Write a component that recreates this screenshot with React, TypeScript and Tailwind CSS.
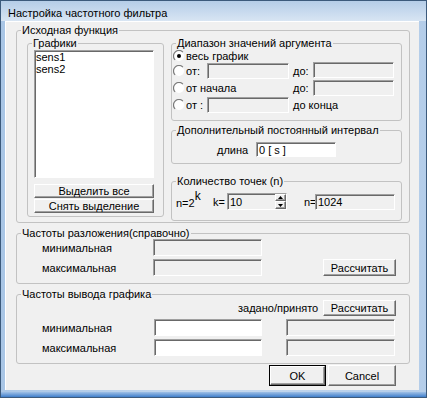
import React from "react";

const sunken =
  "border border-t-[#a0a0a0] border-l-[#a0a0a0] border-b-white border-r-white shadow-[inset_1px_1px_0_#696969]";
const raised =
  "border border-t-white border-l-white border-b-[#696969] border-r-[#696969] shadow-[inset_-1px_-1px_0_#a0a0a0] bg-[#f0f0f0] flex items-center justify-center";
const group = "border border-[#c2c2c2] rounded-[3px]";

function Radio({ checked }: { checked?: boolean }) {
  return (
    <svg width="12" height="12" viewBox="0 0 12 12" className="shrink-0">
      <circle cx="6" cy="6" r="5" fill="#ffffff" />
      <path d="M 2.1 9.9 A 5.5 5.5 0 0 1 9.9 2.1" fill="none" stroke="#7a7a7a" strokeWidth="1.2" />
      {checked && <circle cx="6" cy="6" r="2" fill="#000000" />}
    </svg>
  );
}

function Legend({ children }: { children: React.ReactNode }) {
  return <legend className="ml-[4px] px-[1px] leading-[12px]">{children}</legend>;
}

export default function App() {
  return (
    <div className="w-[427px] h-[398px] border border-[#3c5a7c] bg-linear-to-r from-[#a9c6e6] via-[#c6d9ee] to-[#b4cde9] flex flex-col font-['Liberation_Sans',Arial,sans-serif] text-[11px] leading-[12px] text-black overflow-hidden">
      <div className="h-[20px] shrink-0 pl-[7px] pt-[3px] flex items-center bg-linear-to-b from-[#b5cde8] to-[#d8e5f3]">
        Настройка частотного фильтра
      </div>
      <div className="ml-[4px] w-[414px] h-[369px] shrink-0 bg-[#f0f0f0] flex flex-col shadow-[inset_1px_1px_0_#ffffff]">
        {/* Исходная функция */}
        <fieldset className={`mt-[3px] ml-[11px] w-[394px] h-[199px] ${group}`}>
          <Legend>Исходная функция</Legend>
          <div className="flex">
            {/* Графики */}
            <fieldset className={`mt-[1px] ml-[10px] w-[137px] h-[180px] ${group}`}>
              <Legend>Графики</Legend>
              <div className={`mt-[1px] ml-[6px] w-[120px] h-[128px] bg-white ${sunken} pl-[1px]`}>
                <div className="leading-[12px]">sens1</div>
                <div className="leading-[12px]">sens2</div>
              </div>
              <div className={`mt-[6px] ml-[6px] w-[120px] h-[14px] ${raised}`}>Выделить все</div>
              <div className={`mt-[1px] ml-[6px] w-[120px] h-[14px] ${raised}`}>Снять выделение</div>
            </fieldset>
            {/* Right column */}
            <div className="ml-[7px] w-[231px] flex flex-col">
              <fieldset className={`mt-[1px] w-[231px] h-[84px] ${group}`}>
                <Legend>Диапазон значений аргумента</Legend>
                <div className="flex h-[13px] items-center">
                  <div className="ml-[1px] flex items-center gap-[1px]">
                    <Radio checked />
                    <span>весь график</span>
                  </div>
                </div>
                <div className="mt-[1px] flex h-[16px] items-center">
                  <div className="ml-[1px] w-[34px] flex items-center gap-[1px]">
                    <Radio />
                    <span>от:</span>
                  </div>
                  <div className={`w-[82px] h-[16px] ${sunken}`} />
                  <span className="ml-[4px] w-[20px]">до:</span>
                  <div className={`-mt-[2px] w-[81px] h-[16px] ${sunken}`} />
                </div>
                <div className="mt-[1px] flex h-[16px] items-center">
                  <div className="ml-[1px] w-[120px] flex items-center gap-[1px]">
                    <Radio />
                    <span>от начала</span>
                  </div>
                  <span className="w-[20px]">до:</span>
                  <div className={`w-[81px] h-[16px] ${sunken}`} />
                </div>
                <div className="mt-[1px] flex h-[16px] items-center">
                  <div className="ml-[1px] w-[34px] flex items-center gap-[1px]">
                    <Radio />
                    <span>от :</span>
                  </div>
                  <div className={`w-[82px] h-[16px] ${sunken}`} />
                  <span className="ml-[4px]">до конца</span>
                </div>
              </fieldset>

              <fieldset className={`mt-[3px] w-[231px] h-[40px] ${group}`}>
                <Legend>Дополнительный постоянный интервал</Legend>
                <div className="mt-[6px] flex h-[15px] items-center">
                  <span className="ml-[45px] w-[39px]">длина</span>
                  <div className={`w-[80px] h-[15px] bg-white ${sunken} pl-[2px] flex items-center`}>0 [ s ]</div>
                </div>
              </fieldset>

              <fieldset className={`mt-[11px] w-[231px] h-[46px] ${group}`}>
                <Legend>Количество точек (n)</Legend>
                <div className="mt-[6px] flex h-[17px] items-end">
                  <span className="ml-[4px] w-[37px] leading-[12px] pb-[1px]">
                    n=2<span className="relative -top-[7px] text-[12px]">k</span>
                  </span>
                  <span className="w-[14px] self-center">k=</span>
                  <div className={`w-[60px] h-[17px] ${sunken} flex`}>
                    <span className="flex-1 pl-[2px] self-center">10</span>
                    <div className="w-[11px] flex flex-col">
                      <div className={`h-[7px] ${raised}`}>
                        <svg width="5" height="3" viewBox="0 0 5 3"><path d="M0 3 L2.5 0 L5 3 Z" fill="#000" /></svg>
                      </div>
                      <div className={`h-[8px] ${raised}`}>
                        <svg width="5" height="3" viewBox="0 0 5 3"><path d="M0 0 L2.5 3 L5 0 Z" fill="#000" /></svg>
                      </div>
                    </div>
                  </div>
                  <span className="ml-[17px] w-[11px] self-center">n=</span>
                  <div className={`w-[80px] h-[16px] ${sunken} pl-[2px] flex items-center self-center`}>1024</div>
                </div>
              </fieldset>
            </div>
          </div>
        </fieldset>

        {/* Частоты разложения */}
        <fieldset className={`mt-[4px] ml-[11px] w-[394px] h-[57px] ${group}`}>
          <Legend>Частоты разложения(справочно)</Legend>
          <div className="flex h-[17px] items-center">
            <span className="ml-[25px] w-[111px]">минимальная</span>
            <div className={`w-[109px] h-[17px] ${sunken}`} />
          </div>
          <div className="mt-[3px] flex h-[17px] items-center">
            <span className="ml-[25px] w-[111px]">максимальная</span>
            <div className={`w-[109px] h-[17px] ${sunken}`} />
            <div className={`ml-[61px] w-[73px] h-[17px] ${raised}`}>Рассчитать</div>
          </div>
        </fieldset>

        {/* Частоты вывода графика */}
        <fieldset className={`mt-[4px] ml-[11px] w-[394px] h-[76px] ${group}`}>
          <Legend>Частоты вывода графика</Legend>
          <div className="flex h-[16px] items-center">
            <span className="ml-[221px] w-[85px]">задано/принято</span>
            <div className={`w-[73px] h-[16px] ${raised}`}>Рассчитать</div>
          </div>
          <div className="mt-[3px] flex h-[17px] items-center">
            <span className="ml-[25px] w-[112px]">минимальная</span>
            <div className={`w-[108px] h-[17px] bg-white ${sunken}`} />
            <div className={`ml-[24px] w-[109px] h-[17px] ${sunken}`} />
          </div>
          <div className="mt-[3px] flex h-[17px] items-center">
            <span className="ml-[25px] w-[112px]">максимальная</span>
            <div className={`w-[108px] h-[17px] bg-white ${sunken}`} />
            <div className={`ml-[24px] w-[109px] h-[17px] ${sunken}`} />
          </div>
        </fieldset>

        {/* OK / Cancel */}
        <div className="mt-[1px] flex h-[21px]">
          <div className="ml-[264px] w-[57px] h-[21px] border border-[#000000]">
            <div className={`w-full h-full ${raised}`}>OK</div>
          </div>
          <div className={`ml-[2px] w-[68px] h-[21px] ${raised}`}>Cancel</div>
        </div>
      </div>
      <div className="mt-[2px] w-full h-[5px] shrink-0 bg-linear-to-b from-[#9fc0e6] to-[#3f7fcb]" />
    </div>
  );
}
